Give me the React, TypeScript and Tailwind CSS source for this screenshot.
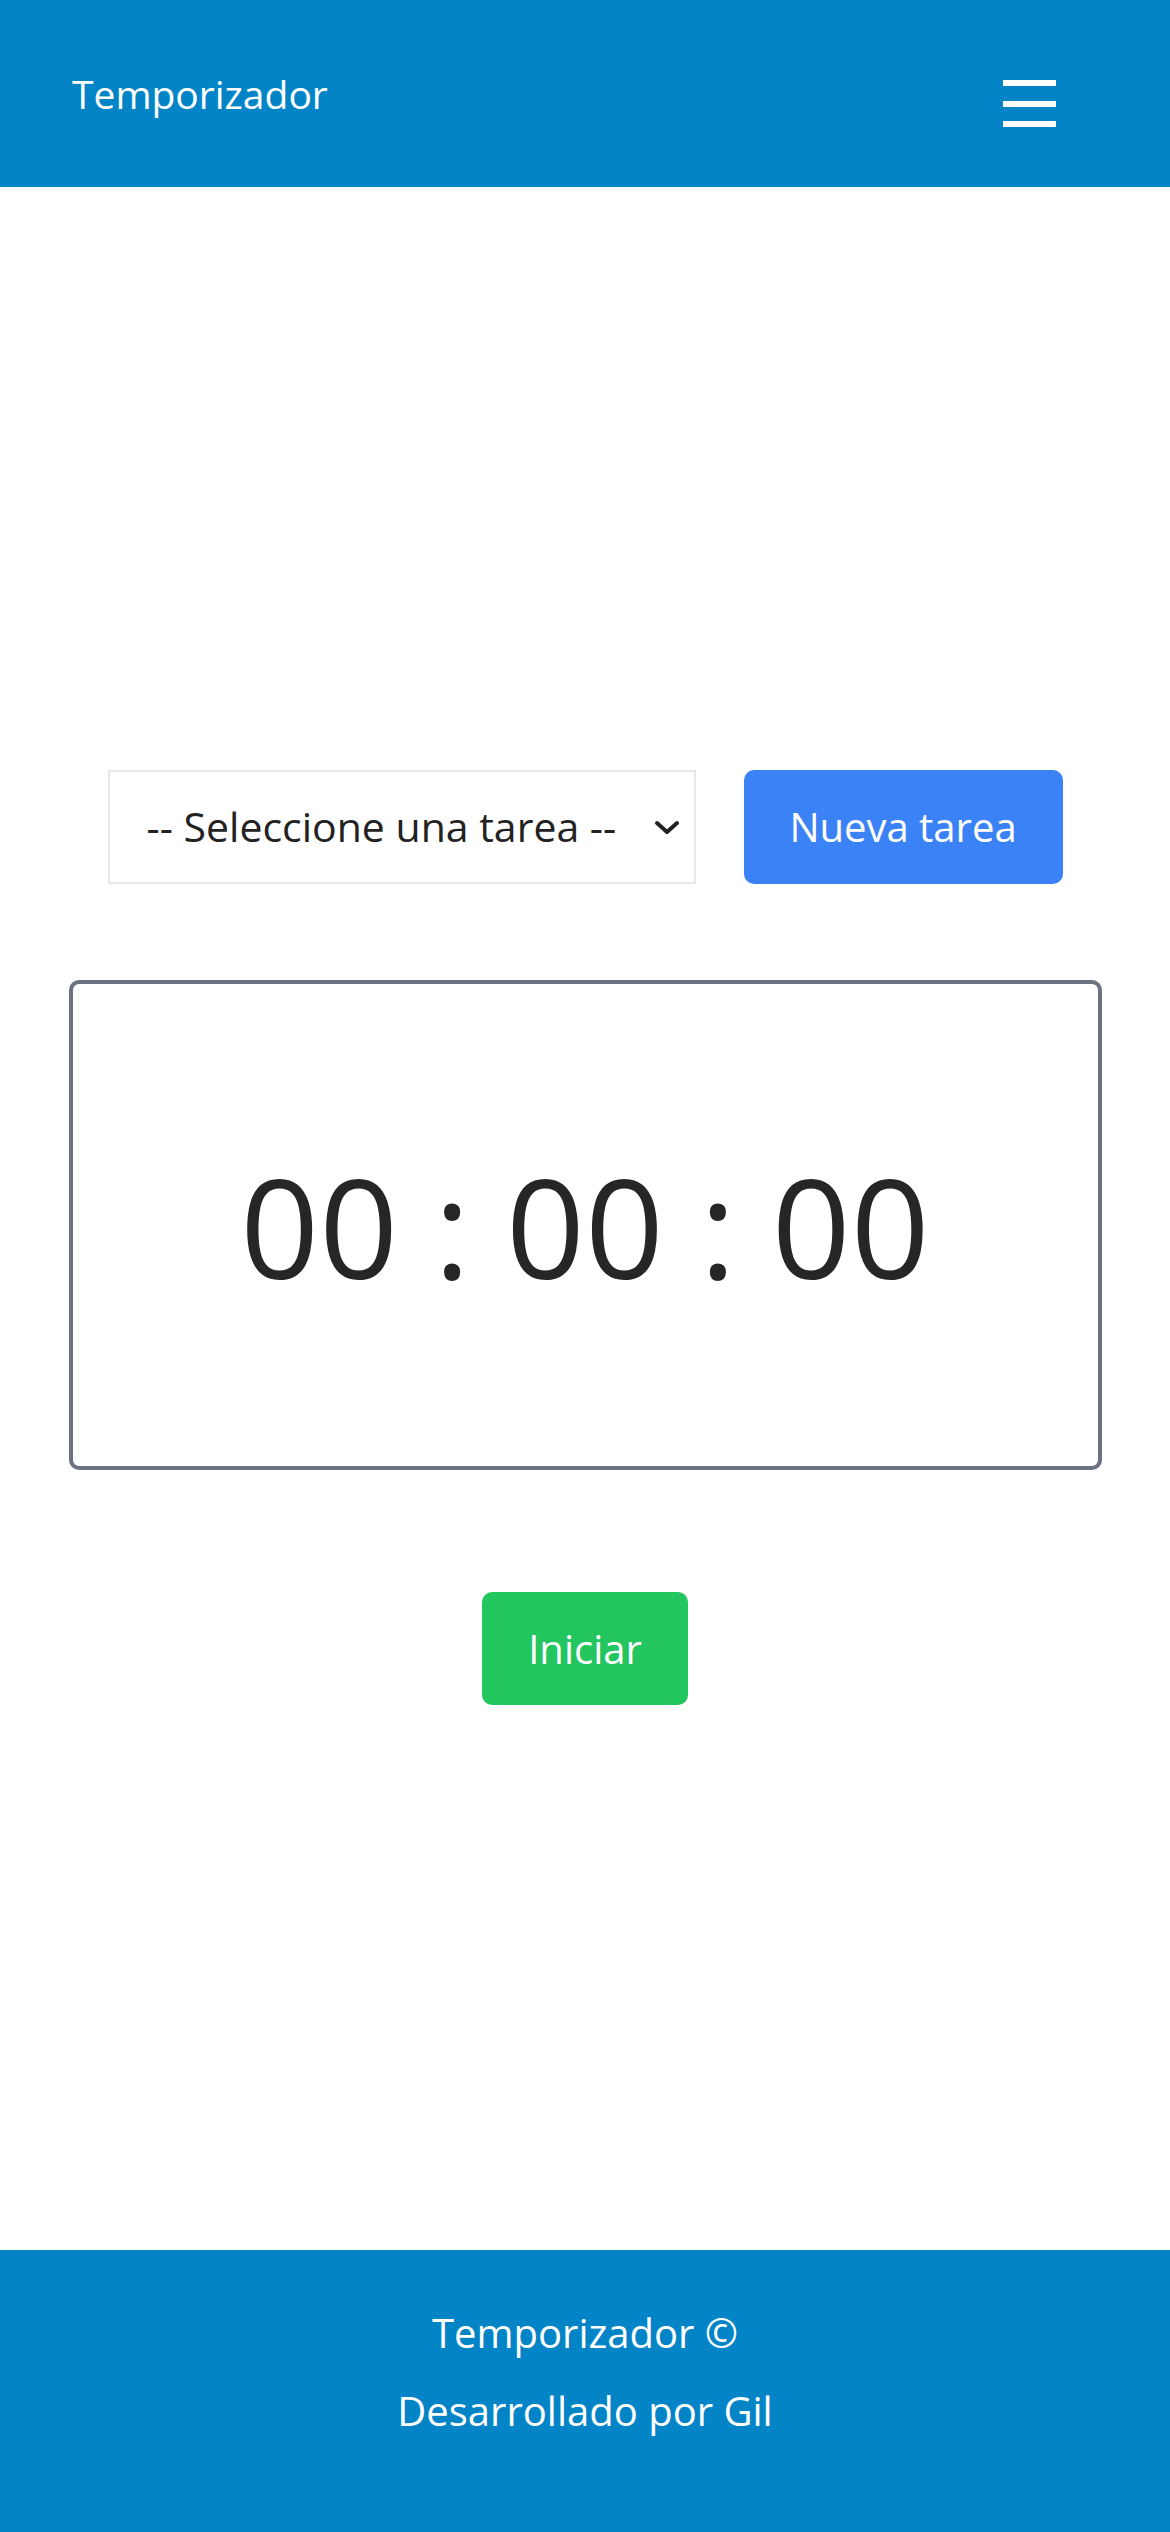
import React from "react";

export default function App() {
  return (
    <div
      className="flex min-h-screen flex-col bg-white"
      style={{ fontFamily: '"Open Sans", "Noto Sans", sans-serif' }}
    >
      <header className="flex h-[187px] items-center justify-between bg-[#0284c7] pl-[72px] pr-[114px]">
        <span className="text-[39px] leading-none text-white">Temporizador</span>
        <button className="mt-[80px] flex h-[47px] w-[53px] flex-col justify-between self-start" aria-label="Menú">
          <span className="block h-[6px] w-full bg-white" />
          <span className="block h-[6px] w-full bg-white" />
          <span className="block h-[6px] w-full bg-white" />
        </button>
      </header>

      <main className="flex flex-1 flex-col items-center pt-[583px]">
        <div className="flex gap-[48px]">
          <div className="relative h-[114px] w-[588px]">
            <select
              className="h-full w-full appearance-none border-2 border-[#e5e7eb] bg-white pl-[37px] pr-[50px] text-[41px] text-[#222222] outline-none"
              defaultValue=""
            >
              <option value="">-- Seleccione una tarea --</option>
            </select>
            <svg
              className="pointer-events-none absolute right-[16px] top-[50px]"
              width="26"
              height="16"
              viewBox="0 0 26 16"
              fill="none"
            >
              <path d="M3 3 L13 12 L23 3" stroke="#222222" strokeWidth="4" strokeLinecap="round" strokeLinejoin="round" />
            </svg>
          </div>
          <button className="h-[114px] w-[319px] rounded-[10px] bg-[#3b82f6] text-[40px] text-white">
            Nueva tarea
          </button>
        </div>

        <div className="mt-[96px] flex h-[490px] w-[1033px] items-center justify-center rounded-[10px] border-4 border-[#6b7280]">
          <span className="text-[138px] leading-none text-[#262626]">00 : 00 : 00</span>
        </div>

        <button className="mt-[122px] h-[113px] w-[206px] rounded-[10px] bg-[#22c55e] text-[40px] text-white">
          Iniciar
        </button>
      </main>

      <footer className="flex h-[282px] flex-col items-center bg-[#0284c7] pt-[44px] text-[40px] leading-[78px] text-white">
        <p>Temporizador ©</p>
        <p>Desarrollado por Gil</p>
      </footer>
    </div>
  );
}
